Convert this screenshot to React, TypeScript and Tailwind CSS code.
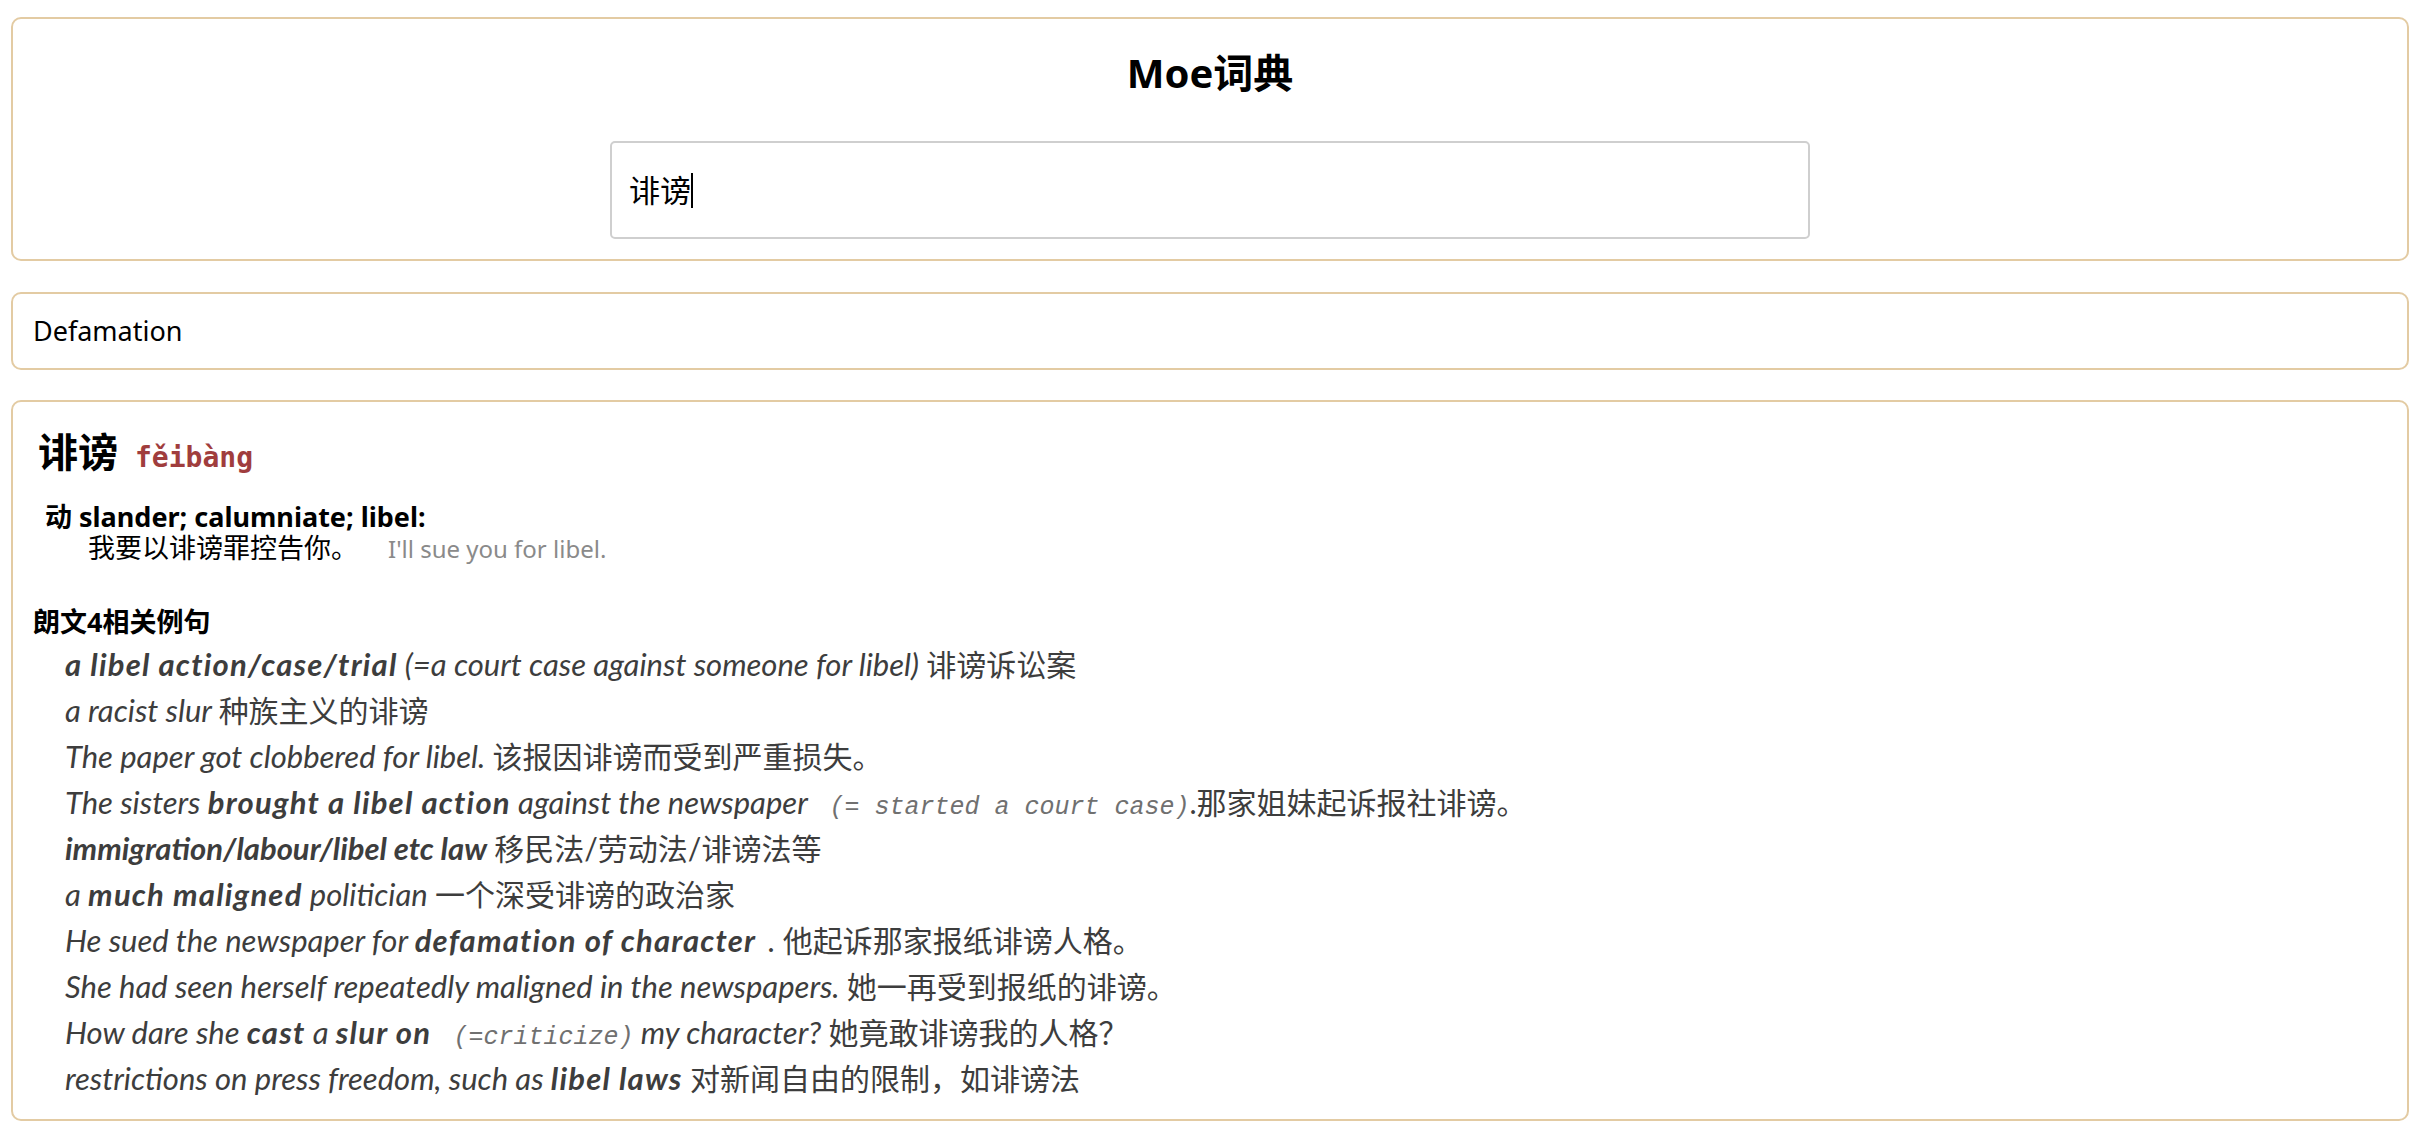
import React from 'react';

const card = 'border-2 border-[#e3cba3] rounded-[10px] bg-white';

const Zh: React.FC<{ children: React.ReactNode }> = ({ children }) => (
  <span className="not-italic text-[30px] leading-none">{children}</span>
);

const B: React.FC<{ children: React.ReactNode; tight?: boolean }> = ({ children, tight }) => (
  <span className={tight ? 'font-bold' : 'font-bold tracking-[1.2px]'}>{children}</span>
);

const Mono: React.FC<{ children: React.ReactNode }> = ({ children }) => (
  <span className="font-['Liberation_Mono',monospace] text-[25px] leading-none text-[#707070] whitespace-pre">{children}</span>
);

const examples: React.ReactNode[] = [
  <>
    <B>a libel action/case/trial</B> (=a court case against someone for libel) <Zh>诽谤诉讼案</Zh>
  </>,
  <>
    a racist slur <Zh>种族主义的诽谤</Zh>
  </>,
  <>
    The paper got clobbered for libel. <Zh>该报因诽谤而受到严重损失。</Zh>
  </>,
  <>
    The sisters <B>brought a libel action</B> against the newspaper <Mono> (= started a court case)</Mono>
    <Zh>.那家姐妹起诉报社诽谤。</Zh>
  </>,
  <>
    <B tight>immigration/labour/libel etc law</B> <Zh>移民法/劳动法/诽谤法等</Zh>
  </>,
  <>
    a <B>much maligned</B> politician <Zh>一个深受诽谤的政治家</Zh>
  </>,
  <>
    He sued the newspaper for <B>defamation of character</B>
    <span className="ml-[12px]">. </span>
    <Zh>他起诉那家报纸诽谤人格。</Zh>
  </>,
  <>
    She had seen herself repeatedly maligned in the newspapers. <Zh>她一再受到报纸的诽谤。</Zh>
  </>,
  <>
    How dare she <B>cast</B> a <B>slur on</B> <Mono> (=criticize)</Mono> my character? <Zh>她竟敢诽谤我的人格？</Zh>
  </>,
  <>
    restrictions on press freedom, such as <B>libel laws</B> <Zh>对新闻自由的限制，如诽谤法</Zh>
  </>,
];

export default function App() {
  return (
    <div className="min-h-screen bg-white pl-[11px] pr-[25px] pt-[17px] pb-[20px] font-['Noto_Sans','Noto_Sans_CJK_SC',sans-serif] text-black">
      <header className={`${card} h-[244px] flex flex-col items-center pt-[27px]`}>
        <h1 className="text-[40px] font-bold leading-[53px]">Moe词典</h1>
        <div className="mt-[42px] w-[1200px] h-[98px] border-2 border-[#cfcfcf] rounded-[5px] flex items-center px-[17px] text-[31px]">
          <span>诽谤</span>
          <span className="w-[2px] h-[35px] bg-black"></span>
        </div>
      </header>

      <div className={`${card} mt-[31px] h-[78px] flex items-center px-[20px] text-[27px]`}>
        Defamation
      </div>

      <main className={`${card} mt-[30px] pt-[24px] pb-[18px] px-[20px] text-[27px]`}>
        <div className="flex items-baseline gap-[17px] pl-[5px] leading-[52px]">
          <span className="text-[40px] font-bold">诽谤</span>
          <span className="font-['DejaVu_Sans_Mono',monospace] text-[28px] font-bold text-[#a03d3d]">fěibàng</span>
        </div>

        <div className="mt-[17px] pl-[12px] leading-[31px] font-bold">动 slander; calumniate; libel:</div>
        <div className="pl-[55px] leading-[31px] flex items-baseline">
          <span>我要以诽谤罪控告你。</span>
          <span className="ml-[30px] text-[24px] text-[#8a8a8a]">I'll sue you for libel.</span>
        </div>

        <h3 className="mt-[42px] leading-[31px] font-bold">朗文4相关例句</h3>
        <ul className="mt-[4px] pl-[32px] font-['Lato','Noto_Sans_CJK_SC',sans-serif] italic text-[31px] leading-[46px] text-[#3d3d3d]">
          {examples.map((ex, i) => (
            <li key={i} className="whitespace-nowrap h-[46px]">{ex}</li>
          ))}
        </ul>
      </main>
    </div>
  );
}
